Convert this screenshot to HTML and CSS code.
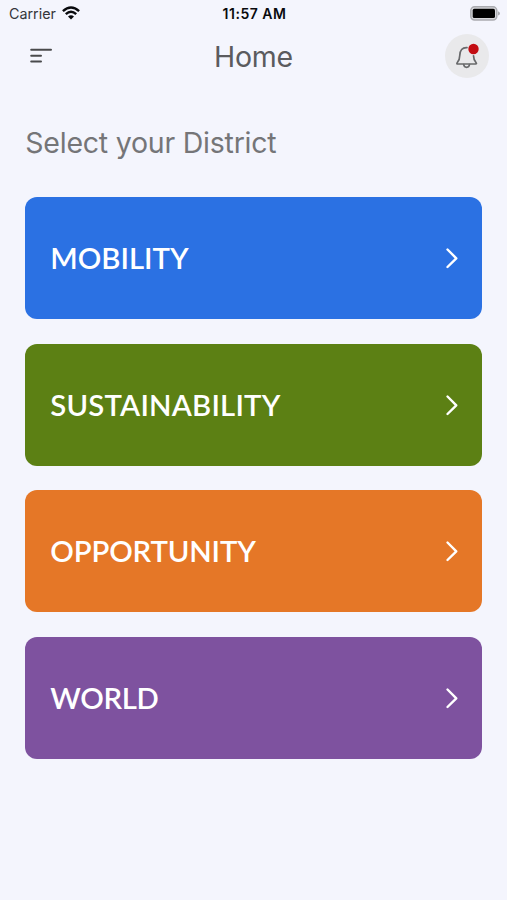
FILE: index.html
```html
<!DOCTYPE html>
<html lang="en">
<head>
<meta charset="utf-8">
<title>Home</title>
<link rel="stylesheet" href="styles.css">
</head>
<body>
<div class="status">
  <div class="carrier"><span>Carrier</span>
    <svg width="18" height="14" viewBox="0 0 18 14" fill="none" stroke="#090a0d" stroke-width="2.4"><path d="M.9 5.1Q9-2.3 17.1 5.1M3.8 8.1Q9 3.3 14.2 8.1"/><path d="M6 10.5Q9 7.8 12 10.5L9 13.6Z" fill="#090a0d" stroke="none"/></svg>
  </div>
  <span class="time">11:57 AM</span>
  <svg class="battery" width="30" height="15" viewBox="0 0 30 15"><rect x=".8" y=".8" width="26" height="13.2" rx="3.8" fill="#d8d8dc" stroke="#aaabb0" stroke-width="1.5"/><rect x="2.7" y="2.8" width="22.3" height="9.3" rx="1.6" fill="#000"/><path d="M28 5.2Q30 6 30 7.4Q30 8.9 28 9.6Z" fill="#aaabb0"/></svg>
</div>
<header class="bar">
  <svg class="menu" width="24" height="18" viewBox="0 0 24 18" fill="none" stroke="#494a4c" stroke-width="2" stroke-linecap="round"><path d="M2.2 2.7H22M2.2 8.7H12M2.2 14.6H12"/></svg>
  <h1 class="title">Home</h1>
  <button class="bell" aria-label="Notifications">
    <svg width="44" height="44" viewBox="0 0 44 44" fill="none" stroke="#68696b" stroke-width="1.7" stroke-linejoin="round" stroke-linecap="round"><path d="M22 13.6C17.2 13.3 14.9 16.3 14.8 21.2C14.8 25.5 13.6 27 12.2 28.7C11.5 29.6 12 30 12.8 30H30.6C31.4 30 31.8 29.5 31.1 28.7C29.3 26.6 28.5 25 28.5 21.8"/><path d="M18.7 30.5C19.2 34.2 24 34.2 24.5 30.5"/><circle cx="28.5" cy="15" r="5.2" fill="#c30c12" stroke="none"/></svg>
  </button>
</header>
<main class="content">
  <h2 class="prompt">Select your District</h2>
  <nav class="cards">
    <a class="card mobility"><span>MOBILITY</span><svg class="chevron" viewBox="0 0 14 22"><path d="M2.5 2.5L11.3 11.3L2.5 20"/></svg></a>
    <a class="card sustainability"><span>SUSTAINABILITY</span><svg class="chevron" viewBox="0 0 14 22"><path d="M2.5 2.5L11.3 11.3L2.5 20"/></svg></a>
    <a class="card opportunity"><span>OPPORTUNITY</span><svg class="chevron" viewBox="0 0 14 22"><path d="M2.5 2.5L11.3 11.3L2.5 20"/></svg></a>
    <a class="card world"><span>WORLD</span><svg class="chevron" viewBox="0 0 14 22"><path d="M2.5 2.5L11.3 11.3L2.5 20"/></svg></a>
  </nav>
</main>
</body>
</html>
```
FILE: styles.css
```css
* { box-sizing: border-box; }
body { margin: 0; width: 507px; height: 900px; background: #f4f5fd; font-family: Lato, "Open Sans", sans-serif; overflow: hidden; }
h1, h2 { margin: 0; font-weight: 400; font-family: Inter, sans-serif; }
svg { display: block; flex: none; }
.status { display: grid; grid-template-columns: 1fr auto 1fr; align-items: center; height: 28px; padding: 0 7px 0 9px; font-family: Inter, sans-serif; font-size: 14.3px; color: #090a0d; }
.carrier { display: flex; align-items: center; gap: 6px; height: 28px; padding-bottom: 2px; color: #35363a; }
.time { height: 20px; line-height: 19px; font-weight: 600; font-size: 14px; letter-spacing: .5px; }
.battery { justify-self: end; position: relative; top: -1px; }
.bar { display: grid; grid-template-columns: 44px 1fr 44px; align-items: center; height: 56px; padding: 0 18px 0 29px; }
.title { margin-left: -11px; padding-top: 2px; text-align: center; font-size: 28.5px; line-height: 40px; color: #5b5b5e; letter-spacing: -.2px; }
.bell { width: 44px; height: 44px; padding: 0; border: 0; border-radius: 50%; background: #e9e9eb; }
.content { padding: 38px 24.7px 0 25.3px; }
.prompt { height: 40px; font-size: 28.5px; line-height: 42px; color: #757578; letter-spacing: -.23px; white-space: nowrap; }
.cards { display: flex; flex-direction: column; gap: 24.6px; margin-top: 35.3px; }
.card { display: flex; align-items: center; justify-content: space-between; height: 122px; padding: 0 23px 0 25px; border-radius: 12px; color: #fff; font-size: 29.3px; font-weight: 600; }
.card span { line-height: 36px; }
.chevron { width: 14px; height: 22px; fill: none; stroke: #fff; stroke-width: 2.4; stroke-linecap: round; stroke-linejoin: round; }
.mobility { background: #2b71e3; }
.sustainability { background: #5c8014; letter-spacing: .2px; }
.opportunity { background: #e57727; letter-spacing: -.15px; }
.world { background: #7e529f; letter-spacing: -.3px; }
```
